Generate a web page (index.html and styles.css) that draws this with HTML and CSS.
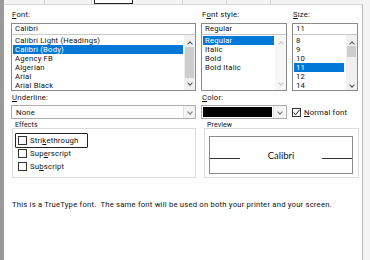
FILE: index.html
```html
<!DOCTYPE html>
<html>
<head>
<meta charset="utf-8">
<link rel="stylesheet" href="styles.css">
</head>
<body>
<div class="win">
  <div class="edge"></div>
  <div class="dlg">
    <div class="tabs">
      <span class="tab w1"></span>
      <span class="tab w2"></span>
      <span class="tab sel"></span>
      <span class="tab w3"></span>
      <span class="tab w4"></span>
      <span class="tab w5"></span>
    </div>
    <div class="page">
      <div class="top">
        <div class="col">
          <div class="lbl"><u>F</u>ont:</div>
          <div class="input">Calibri</div>
          <div class="list">
            <div class="items">
              <div class="it">Calibri Light (Headings)</div>
              <div class="it hl">Calibri (Body)</div>
              <div class="it">Agency FB</div>
              <div class="it">Algerian</div>
              <div class="it">Arial</div>
              <div class="it">Arial Black</div>
            </div>
            <div class="sb">
              <span class="arr up"></span>
              <span class="thumb"></span>
              <span class="arr dn"></span>
            </div>
          </div>
        </div>
        <div class="col">
          <div class="lbl">F<u>o</u>nt style:</div>
          <div class="input">Regular</div>
          <div class="list">
            <div class="items">
              <div class="it hl">Regular</div>
              <div class="it">Italic</div>
              <div class="it">Bold</div>
              <div class="it">Bold Italic</div>
            </div>
            <div class="sb dis">
              <span class="arr up"></span>
              <span class="space"></span>
              <span class="arr dn"></span>
            </div>
          </div>
        </div>
        <div class="col">
          <div class="lbl"><u>S</u>ize:</div>
          <div class="input">11</div>
          <div class="list">
            <div class="items">
              <div class="it">8</div>
              <div class="it">9</div>
              <div class="it">10</div>
              <div class="it hl small">11</div>
              <div class="it">12</div>
              <div class="it">14</div>
            </div>
            <div class="sb">
              <span class="arr up"></span>
              <span class="thumb s"></span>
              <span class="arr dn"></span>
            </div>
          </div>
        </div>
      </div>
      <div class="mid">
        <div class="col">
          <div class="lbl"><u>U</u>nderline:</div>
          <div class="combo">
            <span class="val">None</span>
            <span class="drop"><span class="arr dn"></span></span>
          </div>
        </div>
        <div class="col">
          <div class="lbl"><u>C</u>olor:</div>
          <div class="combo color">
            <span class="swatch"></span>
            <span class="drop"><span class="arr dn"></span></span>
          </div>
        </div>
        <div class="col normal">
          <span class="cb checked"><svg width="9" height="9" viewBox="0 0 9 9"><path d="M1.5 4.6 L3.6 6.8 L7.6 1.8" fill="none" stroke="#222" stroke-width="1"/></svg></span>
          <span><u>N</u>ormal font</span>
        </div>
      </div>
      <div class="groups">
        <div class="grp effects">
          <div class="gl">Effects</div>
          <div class="gbox">
            <div class="chk focus"><span class="cb"></span><span>Stri<u>k</u>ethrough</span></div>
            <div class="chk"><span class="cb"></span><span>Sup<u>e</u>rscript</span></div>
            <div class="chk"><span class="cb"></span><span>Su<u>b</u>script</span></div>
          </div>
        </div>
        <div class="grp preview">
          <div class="gl">Preview</div>
          <div class="gbox">
            <div class="pv">
              <span class="line"></span>
              <span class="pt">Calibri</span>
              <span class="line"></span>
            </div>
          </div>
        </div>
      </div>
      <p class="note">This is a TrueType font.&nbsp; The same font will be used on both your printer and your screen.</p>
    </div>
  </div>
  <div class="redge"></div>
</div>
</body>
</html>
```

FILE: styles.css
```css
* { box-sizing: border-box; }
html, body { margin: 0; padding: 0; }
body {
  width: 370px;
  height: 260px;
  overflow: hidden;
  background: #f0f0f0;
  font-family: "Roboto", "Noto Sans", sans-serif;
  font-size: 7.7px;
  letter-spacing: 0.2px;
  color: #111;
}
u { text-decoration: underline; text-underline-offset: 1px; }
.win { display: flex; height: 260px; }
.edge { width: 4px; background: #9a9a9a; flex: none; }
.redge { width: 7px; background: #f4f4f4; flex: none; }
.dlg { flex: 1; display: flex; flex-direction: column; background: #f4f4f4; }
.tabs { height: 4px; display: flex; }
.tab { height: 4px; border-right: 1px solid #d6d6d6; background: #f4f4f4; flex: none; }
.w1 { width: 41px; }
.w2 { width: 47px; }
.tab.sel { width: 39px; border: 1px solid #222; border-top: none; border-radius: 0 0 1px 1px; background: #fff; margin-left: 2px; }
.w3 { width: 47px; margin-left: 3px; }
.w4 { width: 44px; }
.w5 { width: 44px; }
.page {
  flex: 1;
  background: #fff;
  border-top: 1px solid #d9d9d9;
  border-right: 1px solid #b9b9b9;
  padding: 5px 0 0 7px;
}
.top { display: grid; grid-template-columns: 185px 86px 66px; column-gap: 5px; }
.lbl { height: 13px; line-height: 10px; padding-left: 1px; }
.input {
  height: 12px;
  border: 1px solid #8a8a8a;
  border-bottom-color: #c8c8c8;
  line-height: 10px;
  padding-left: 3px;
}
.list {
  height: 56px;
  border: 1px solid #8a8a8a;
  border-top: none;
  display: flex;
}
.items { flex: 1; padding: 1px 1px 0 1px; }
.it { height: 9px; line-height: 9px; padding-left: 2px; }
.it.hl { background: #0078d7; color: #fff; }
.it.hl.small { margin-right: 1px; }
.sb { width: 11px; display: flex; flex-direction: column; align-items: center; background: #f0f0f0; }
.sb .thumb { width: 9px; flex: 1; background: #cdcdcd; margin: 0 0 1px; }
.sb .thumb.s { flex: none; height: 11px; margin: 1px 0 24px; }
.sb.dis { background: #f7f7f7; }
.sb .space { flex: 1; }
.arr { width: 9px; height: 9px; display: block; position: relative; }
.arr::before {
  content: "";
  position: absolute;
  left: 2.5px;
  width: 3px;
  height: 3px;
  border-left: 1px solid #555;
  border-top: 1px solid #555;
}
.arr.up::before { top: 4px; transform: rotate(45deg); }
.arr.dn::before { top: 2px; transform: rotate(-135deg); }
.sb.dis .arr::before { border-color: #c4c4c4; }
.sb .arr.up { margin-top: 3px; }
.sb .arr.dn { margin-bottom: 2px; }

.mid { display: grid; grid-template-columns: 185px 86px 66px; column-gap: 5px; margin-top: 2px; }
.mid .lbl { height: 12px; }
.combo {
  height: 14px;
  border: 1px solid #adadad;
  display: flex;
  align-items: center;
  background: #fff;
}
.combo .val { flex: 1; padding-left: 4px; }
.combo .drop { width: 12px; height: 12px; border-left: 1px solid #e0e0e0; background: #f4f4f4; display: flex; align-items: center; justify-content: center; }
.combo .drop .arr::before { border-color: #777; }
.combo.color { padding: 1px; }
.combo.color .swatch { flex: 1; height: 10px; background: #000; }
.combo.color .drop { height: 12px; margin-left: 1px; }
.normal { display: flex; align-items: center; gap: 3px; padding-top: 12px; }
.cb { width: 9px; height: 9px; border: 1px solid #333; background: #fff; display: inline-flex; flex: none; }
.cb svg { margin: -1px; }

.groups { display: grid; grid-template-columns: 184px 155px; column-gap: 8px; margin-top: 3px; padding-left: 1px; }
.gl { height: 6px; line-height: 6px; padding-left: 3px; font-size: 7px; letter-spacing: 0.1px; position: relative; z-index: 1; }
.gbox { border: 1px solid #dcdcdc; height: 50px; }
.effects .gbox { padding: 4px 0 0 2px; }
.chk { display: flex; align-items: center; gap: 3px; height: 13px; width: 73px; padding-left: 3px; }
.chk.focus { border: 1px solid #222; border-radius: 1px; height: 15px; padding-left: 2px; margin-bottom: -1px; }
.preview .gbox { padding: 7px 5px 3px 4px; }
.pv { border: 1px solid #8a8a8a; height: 38px; display: flex; align-items: center; }
.pv .line { width: 30px; height: 0; border-top: 1px solid #333; margin-top: 6px; }
.pv .pt { flex: 1; text-align: center; font-size: 9.5px; letter-spacing: 0; font-family: "Lato", "Open Sans", sans-serif; }
.note { margin: 22px 0 0 1px; white-space: nowrap; }
```
